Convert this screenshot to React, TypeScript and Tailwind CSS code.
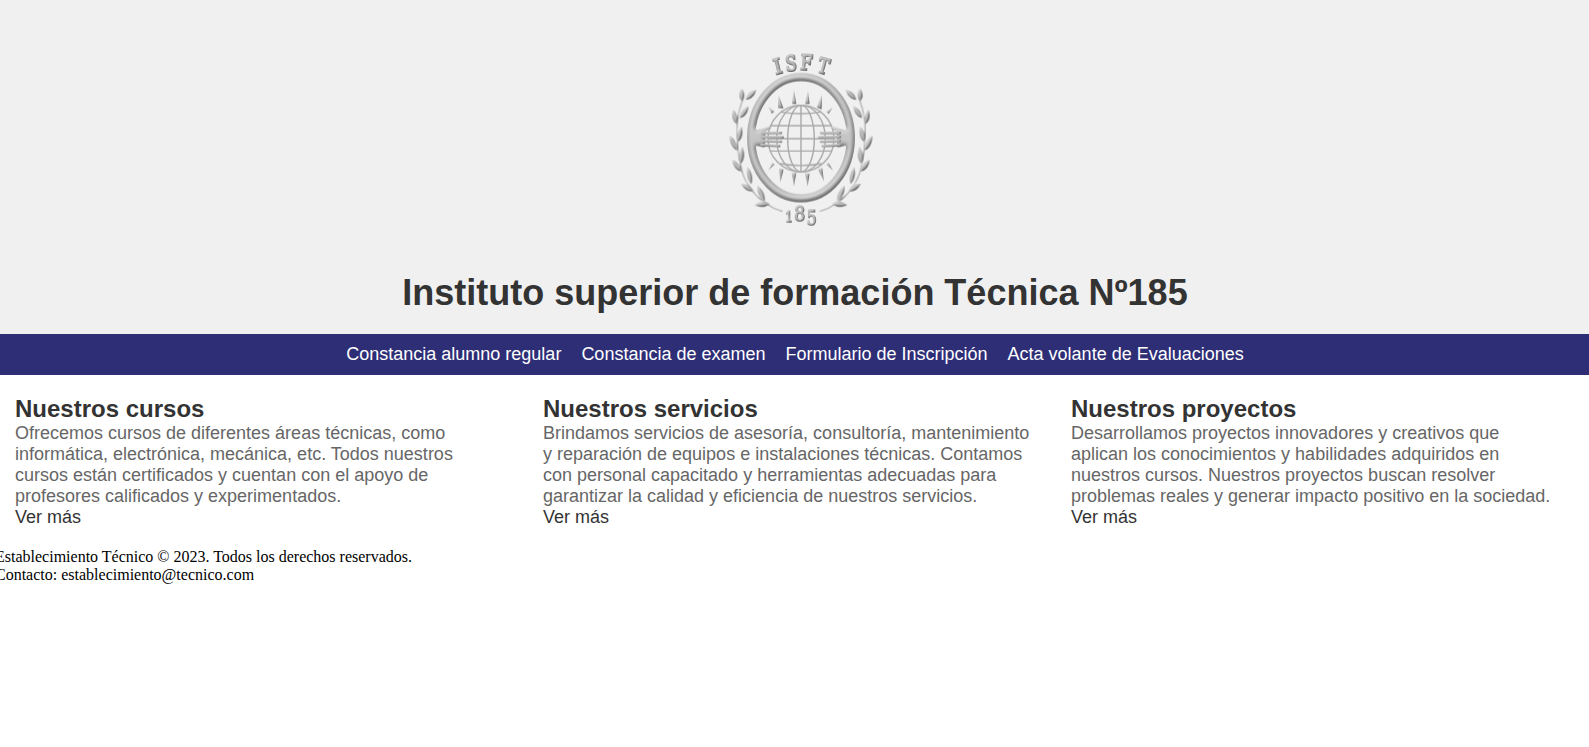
const leaves: number[][] = [
  [66, 184, 65, 146, 7.5],
  [77, 180, 109, 149, 7.5],
  [49, 252, 40, 209, 7.5],
  [60, 235, 86, 198, 7.5],
  [51, 332, 29, 286, 7.5],
  [54, 306, 65, 259, 7.5],
  [63, 395, 37, 359, 7.5],
  [63, 371, 67, 320, 7.5],
  [100, 454, 63, 431, 7.5],
  [94, 433, 83, 381, 7],
  [149, 491, 104, 495, 8],
  [134, 485, 112, 436, 7.5],
];

function leafPath([x1, y1, x2, y2, w]: number[]) {
  const dx = x2 - x1;
  const dy = y2 - y1;
  const len = Math.hypot(dx, dy);
  const nx = (-dy / len) * w * 1.35;
  const ny = (dx / len) * w * 1.35;
  const ax = x1 + dx * 0.3;
  const ay = y1 + dy * 0.3;
  const bx = x1 + dx * 0.6;
  const by = y1 + dy * 0.6;
  return `M${x1} ${y1}C${ax + nx} ${ay + ny} ${bx + nx} ${by + ny} ${x2} ${y2}C${bx - nx} ${by - ny} ${ax - nx} ${ay - ny} ${x1} ${y1}Z`;
}

function Branch() {
  return (
    <g>
      <path d="M67 180C60 205 52 225 51 250C50 290 52 340 64 388C75 430 105 470 138 490Q160 506 187 514" fill="none" stroke="#aaa" strokeWidth="4" />
      {leaves.map((leaf) => (
        <path key={leaf.join()} d={leafPath(leaf)} />
      ))}
    </g>
  );
}

function Palm() {
  return <path d="M86 258C98 272 112 271 126 266L148 259Q157 259 153 265L134 274Q136 278 136 290Q136 310 134 322L124 321C114 316 106 318 98 320L84 326Z" />;
}

function Fingers() {
  return <path d="M126 279L183 279M126 291L188 292M126 303L183 305M124 315L178 318" stroke="#aaa" strokeWidth="8" strokeLinecap="round" />;
}

function Emblem() {
  return (
    <svg width="161" height="200" viewBox="-18 0 483 600" role="img" aria-label="ISFT 185">
      <defs>
        <filter id="tube" x="-10%" y="-10%" width="120%" height="120%" colorInterpolationFilters="sRGB">
          <feGaussianBlur in="SourceAlpha" stdDeviation="6" result="soft" />
          <feDiffuseLighting in="soft" surfaceScale="9" diffuseConstant="1" lightingColor="#dadada" result="lit">
            <feDistantLight azimuth="250" elevation="65" />
          </feDiffuseLighting>
          <feComponentTransfer in="lit" result="toned">
            <feFuncR type="linear" slope="0.7" intercept="0.23" />
            <feFuncG type="linear" slope="0.7" intercept="0.23" />
            <feFuncB type="linear" slope="0.7" intercept="0.23" />
          </feComponentTransfer>
          <feComposite in="toned" in2="SourceAlpha" operator="in" />
        </filter>
        <filter id="fine" x="-10%" y="-10%" width="120%" height="120%" colorInterpolationFilters="sRGB">
          <feGaussianBlur in="SourceAlpha" stdDeviation="2.5" result="soft" />
          <feDiffuseLighting in="soft" surfaceScale="4.5" diffuseConstant="1" lightingColor="#dadada" result="lit">
            <feDistantLight azimuth="235" elevation="62" />
          </feDiffuseLighting>
          <feComponentTransfer in="lit" result="toned">
            <feFuncR type="linear" slope="0.75" intercept="0.15" />
            <feFuncG type="linear" slope="0.75" intercept="0.15" />
            <feFuncB type="linear" slope="0.75" intercept="0.15" />
          </feComponentTransfer>
          <feComposite in="toned" in2="SourceAlpha" operator="in" />
        </filter>
      </defs>

      <g filter="url(#fine)" fill="#aaa">
        <Branch />
        <g transform="translate(486 0) scale(-1 1)">
          <Branch />
        </g>
      </g>

      <g fill="none" stroke="#a8a8a8" strokeWidth="4.2">
        <ellipse cx="243" cy="296" rx="99" ry="100" />
        <ellipse cx="243" cy="296" rx="73" ry="100" />
        <ellipse cx="243" cy="296" rx="40" ry="100" />
        <path d="M243 196V396M183 216Q243 226 303 216M153 257H333M144 296H342M153 333H333M181 371Q243 382 305 371" />
      </g>

      <g filter="url(#fine)" fill="#aaa">
        <path d="M145 200L163 215L155 221ZM176 166L191 205L174 204ZM222 149L229 192H216ZM264 153L269 192H255ZM306 165L305 208L290 202ZM338 203L326 222L319 215Z" />
        <path d="M145 391L157 368L164 373ZM181 427L177 385L191 388ZM222 439L215 399H229ZM263 439L255 400H269ZM312 424L294 388L307 384ZM339 391L319 373L326 367Z" />
      </g>

      <g filter="url(#tube)" fill="#aaa">
        <ellipse cx="243" cy="293" rx="149.5" ry="182" fill="none" stroke="#aaa" strokeWidth="25" />
        <Palm />
        <g transform="translate(486 0) scale(-1 1)">
          <Palm />
        </g>
      </g>
      <g filter="url(#fine)">
        <Fingers />
        <g transform="translate(486 0) scale(-1 1)">
          <Fingers />
        </g>
      </g>

      <g filter="url(#fine)" fill="#aaa" stroke="#aaa" fontFamily="DejaVu Serif, serif" textAnchor="middle">
        <g fontSize="63" strokeWidth="6">
          <text transform="translate(179 101) rotate(-14) scale(.95 1)">I</text>
          <text transform="translate(215 92) rotate(-5) scale(.8 1)">S</text>
          <text transform="translate(258 90) rotate(4) scale(.84 1)">F</text>
          <text transform="translate(305 100) rotate(16) scale(.8 1)">T</text>
        </g>
        <g strokeWidth="5">
          <text transform="translate(207 545) scale(.76 1)" fontSize="47">1</text>
          <text transform="translate(239 543) scale(.88 1)" fontSize="59">8</text>
          <text transform="translate(275 556) scale(.8 1)" fontSize="59">5</text>
        </g>
      </g>
    </svg>
  );
}

const links = ["Constancia alumno regular", "Constancia de examen", "Formulario de Inscripción", "Acta volante de Evaluaciones"];

const sections = [
  {
    title: "Nuestros cursos",
    body: "Ofrecemos cursos de diferentes áreas técnicas, como informática, electrónica, mecánica, etc. Todos nuestros cursos están certificados y cuentan con el apoyo de profesores calificados y experimentados.",
  },
  {
    title: "Nuestros servicios",
    body: "Brindamos servicios de asesoría, consultoría, mantenimiento y reparación de equipos e instalaciones técnicas. Contamos con personal capacitado y herramientas adecuadas para garantizar la calidad y eficiencia de nuestros servicios.",
  },
  {
    title: "Nuestros proyectos",
    body: "Desarrollamos proyectos innovadores y creativos que aplican los conocimientos y habilidades adquiridos en nuestros cursos. Nuestros proyectos buscan resolver problemas reales y generar impacto positivo en la sociedad.",
  },
];

export default function App() {
  return (
    <div className="min-h-screen overflow-hidden bg-white font-['Liberation_Sans',Arial,sans-serif]">
      <header className="flex flex-col items-center bg-[#f0f0f0] pt-10 pb-[21px]">
        <Emblem />
        <h1 className="mt-8 pl-px text-[36px] leading-[41px] font-bold text-[#333]">Instituto superior de formación Técnica Nº185</h1>
      </header>
      <nav className="flex justify-center gap-5 bg-[#2e2e76] py-2.5 pl-px text-lg leading-[21px] text-white">
        {links.map((link) => (
          <a key={link} href="#">
            {link}
          </a>
        ))}
      </nav>
      <div className="-ml-[5px] w-[1584px]">
        <main className="grid grid-cols-3 pt-5">
          {sections.map((section) => (
            <section key={section.title} className="px-5 text-lg leading-[21px]">
              <h2 className="pb-px text-2xl leading-[27px] font-bold text-[#333]">{section.title}</h2>
              <p className="text-[#666]">{section.body}</p>
              <a href="#" className="block text-[#333]">
                Ver más
              </a>
            </section>
          ))}
        </main>
        <footer className="pt-5 font-['Liberation_Serif',serif] text-base leading-[18px] text-black">
          <p>Establecimiento Técnico © 2023. Todos los derechos reservados.</p>
          <p>Contacto: establecimiento@tecnico.com</p>
        </footer>
      </div>
    </div>
  );
}
